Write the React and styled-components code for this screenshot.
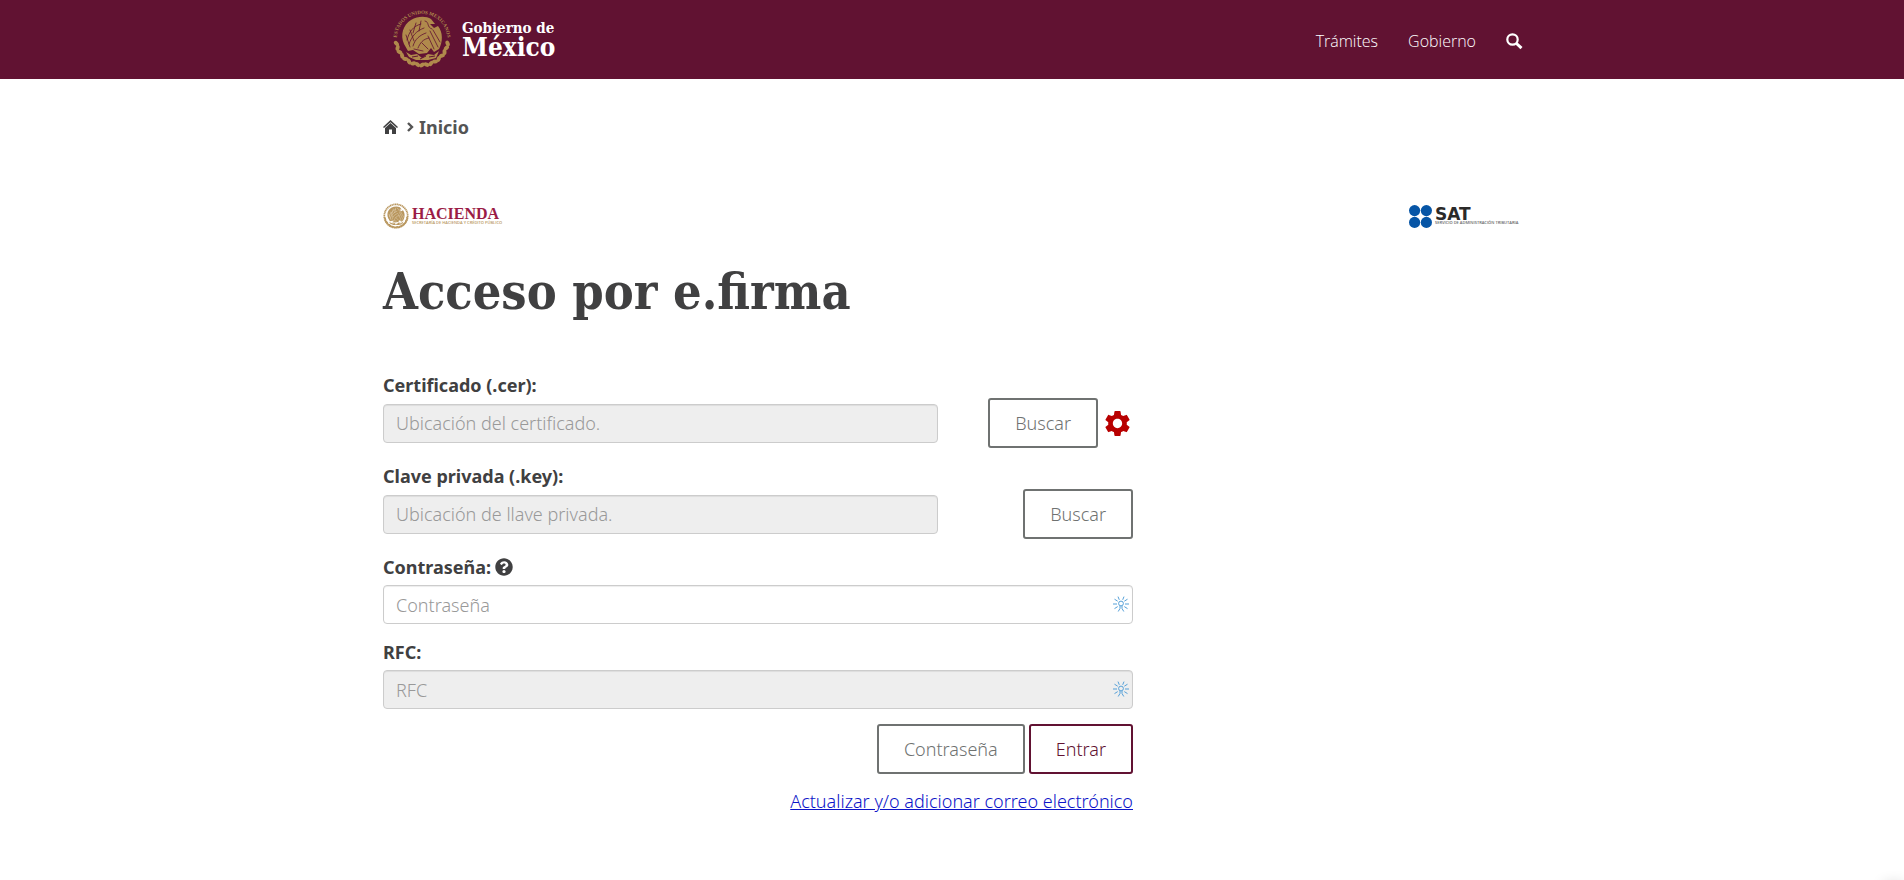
import React from "react";
import styled, { createGlobalStyle } from "styled-components";
import { FaQuestionCircle } from "react-icons/fa";
import { MdSettings } from "react-icons/md";

const GlobalStyle = createGlobalStyle`
  * {
    box-sizing: border-box;
  }
  body {
    margin: 0;
    background: #fff;
    color: #404041;
    font-family: "Noto Sans", "Open Sans", sans-serif;
    font-size: 18px;
    font-weight: 300;
    line-height: 26px;
  }
  strong {
    font-weight: 700;
  }
`;

const serif = `"DejaVu Serif Condensed", "Liberation Serif", serif`;

const arms = [...Array(17)].map((_, i) => 12 + i * 10);

const Emblem = ({ size, color, back, lettering }) => (
  <svg width={size} height={size} viewBox="0 0 60 60" aria-hidden="true">
    <defs>
      <path id="emblem-arc" d="M5.3 35 A25.2 25.2 0 1 1 54.7 35" />
    </defs>
    {lettering ? (
      <text fill={color} fontSize="5" fontWeight="700" fontFamily="Liberation Serif, serif">
        <textPath href="#emblem-arc" startOffset="50%" textAnchor="middle">
          ESTADOS UNIDOS MEXICANOS
        </textPath>
      </text>
    ) : (
      <circle cx="30" cy="30" r="27" fill="none" stroke={color} strokeWidth="4" strokeDasharray="3 1" />
    )}
    {/* laurel and oak wreath */}
    <g fill={color}>
      {arms.map((a, i) => (
        <ellipse
          key={a}
          cx="30"
          cy="4"
          rx="3"
          ry="2"
          transform={`rotate(${a + 88} 30 30) rotate(${i % 2 ? 32 : -32} 30 4)`}
        />
      ))}
    </g>
    {/* eagle */}
    <path
      d="M12 35 C8 26 11 16 19 11 C26 7 34 7 39 10 L43 15 L38 15 L42 19 L46 17 C51 23 51 33 47 40 L42 43 L39 39 L35 44 L27 45 L21 41 L16 42 Z"
      fill={color}
    />
    <g fill="none" stroke={back} strokeWidth="0.8" strokeLinecap="round">
      <path d="M15 31 C17 23 21 17 29 15" />
      <path d="M17 35 C20 27 24 22 32 19" />
      <path d="M21 37 C23 30 28 26 34 24" />
      <path d="M26 39 C28 34 31 30 37 29" />
      <path d="M38 22 L46 38 M41 21 L48 33 M36 27 L42 40" />
      <path d="M24 14 L21 24 M29 12 L27 22 M18 21 L22 32 M14 26 L18 38" />
      <path d="M33 12 C38 13 34 18 40 20 M30 34 L36 40 M22 40 L31 42" />
    </g>
    <path
      d="M14 43 L19 46 L25 45 L30 49 L36 45 L42 46 L47 42 L44 49 L36 51 L24 51 L17 48 Z"
      fill={color}
    />
    <path d="M20 48 L26 47 M28 50 L34 47 M37 48 L43 47" stroke={back} strokeWidth="1" />
  </svg>
);

const HomeIcon = () => (
  <svg width="15" height="14" viewBox="0 0 15 14" aria-hidden="true">
    <path d="M7.5 0 L15 7 L14 8 L7.5 2.2 L1 8 L0 7 Z" fill="#404041" />
    <path d="M7.5 3 L13 8 V14 H9 V9.5 H6 V14 H2 V8 Z" fill="#404041" />
  </svg>
);

const ChevronIcon = () => (
  <svg width="7" height="10" viewBox="0 0 7 10" fill="none" stroke="#545454" aria-hidden="true">
    <path d="M1 1 L5 5 L1 9" strokeWidth="2.4" />
  </svg>
);

const SearchIcon = () => (
  <svg width="17" height="17" viewBox="0 0 17 17" fill="none" stroke="#fff" aria-hidden="true">
    <circle cx="6.5" cy="6.5" r="5.2" strokeWidth="2.2" />
    <path d="M10.5 10.5 L15.5 15.2" strokeWidth="3" />
  </svg>
);

const SparkIcon = () => (
  <svg width="16" height="16" viewBox="0 0 16 16" fill="none" stroke="#55a0d8" aria-hidden="true">
    <circle cx="8" cy="7.5" r="2.4" />
    <path d="M0 8 H4 M12 8 H16 M1.5 3.2 L4.7 5.2 M14.5 3.2 L11.3 5.2 M5 0.6 L6.3 3.8 M11 0.6 L9.7 3.8 M1.5 12.6 L4.7 10.6 M14.5 12.6 L11.3 10.6 M7 10 V12.5 L5.2 15.5 M9 10 V12.5 L10.8 15.5" />
  </svg>
);

const SatMark = () => (
  <svg width="23" height="23" viewBox="0 0 23 23" fill="#0655a6" aria-hidden="true">
    <circle cx="5.6" cy="5.6" r="5.6" />
    <circle cx="17.4" cy="5.6" r="5.6" />
    <circle cx="5.6" cy="17.4" r="5.6" />
    <circle cx="17.4" cy="17.4" r="5.6" />
  </svg>
);

const App = () => {
  return (
    <>
      <GlobalStyle />
      <Header>
        <HeaderInner>
          <Brand href="#">
            <Emblem size={60} color="#b08a4c" back="#611232" lettering />
            <BrandText>
              <small>Gobierno de</small>
              <strong>México</strong>
            </BrandText>
          </Brand>
          <Nav>
            <a href="#">Trámites</a>
            <a href="#">Gobierno</a>
            <a href="#" aria-label="Buscar">
              <SearchIcon />
            </a>
          </Nav>
        </HeaderInner>
      </Header>
      <Container>
        <Breadcrumb>
          <a href="#" aria-label="Portada">
            <HomeIcon />
          </a>
          <ChevronIcon />
          <span>Inicio</span>
        </Breadcrumb>
        <Logos>
          <Logo>
            <Emblem size={26} color="#b9975f" back="#f3ead9" />
            <Hacienda>
              <strong>HACIENDA</strong>
              <small>SECRETARÍA DE HACIENDA Y CRÉDITO PÚBLICO</small>
            </Hacienda>
          </Logo>
          <Logo>
            <SatMark />
            <Sat>
              <strong>SAT</strong>
              <small>SERVICIO DE ADMINISTRACIÓN TRIBUTARIA</small>
            </Sat>
          </Logo>
        </Logos>
        <Title>Acceso por e.firma</Title>
        <Form onSubmit={(e) => e.preventDefault()}>
          <Field>
            <Label htmlFor="cer">Certificado (.cer):</Label>
            <FileRow>
              <Input id="cer" placeholder="Ubicación del certificado." disabled />
              <Actions>
                <Button type="button">Buscar</Button>
                <GearButton type="button" aria-label="Configuración">
                  <MdSettings size={31} />
                </GearButton>
              </Actions>
            </FileRow>
          </Field>
          <Field>
            <Label htmlFor="key">Clave privada (.key):</Label>
            <FileRow>
              <Input id="key" placeholder="Ubicación de llave privada." disabled />
              <Actions>
                <Button type="button">Buscar</Button>
              </Actions>
            </FileRow>
          </Field>
          <Field>
            <Label htmlFor="password">
              Contraseña: <FaQuestionCircle size={18} />
            </Label>
            <InputBox>
              <Input id="password" type="password" placeholder="Contraseña" />
              <SparkIcon />
            </InputBox>
          </Field>
          <Field>
            <Label htmlFor="rfc">RFC:</Label>
            <InputBox>
              <Input id="rfc" placeholder="RFC" disabled />
              <SparkIcon />
            </InputBox>
          </Field>
          <Submit>
            <Button type="button">Contraseña</Button>
            <Button type="submit" $primary>
              Entrar
            </Button>
          </Submit>
          <MailLink href="#">Actualizar y/o adicionar correo electrónico</MailLink>
        </Form>
      </Container>
      <CornerGlow />
    </>
  );
};

const Container = styled.main`
  max-width: 1168px;
  margin: 0 auto;
  padding: 0 15px;
`;

const Header = styled.header`
  background: #611232;
`;

const HeaderInner = styled(Container).attrs({ as: "div" })`
  display: flex;
  justify-content: space-between;
  align-items: center;
  height: 79px;
  padding: 0 13px 2px 24px;
`;

const Brand = styled.a`
  display: flex;
  align-items: center;
  gap: 10px;
  color: #fff;
  text-decoration: none;
`;

const BrandText = styled.span`
  display: flex;
  flex-direction: column;
  font-family: ${serif};
  font-weight: 700;

  small {
    font-size: 15px;
    line-height: 16px;
  }

  strong {
    font-size: 26px;
    line-height: 22px;
  }
`;

const Nav = styled.nav`
  display: flex;
  align-items: center;
  gap: 30px;
  font-family: "Open Sans", sans-serif;
  font-size: 16px;
  padding-top: 5px;

  a {
    display: flex;
    color: #fff;
    text-decoration: none;
  }
`;

const Breadcrumb = styled.nav`
  display: flex;
  align-items: center;
  padding-top: 35px;
  font-weight: 700;
  color: #545454;

  a {
    display: flex;
    margin-right: 9px;
  }

  span {
    margin-left: 5px;
  }
`;

const Logos = styled.div`
  display: flex;
  justify-content: space-between;
  margin-top: 62px;
  padding-right: 3px;
`;

const Logo = styled.div`
  display: flex;
  gap: 3px;
  height: 28px;
  align-items: center;
`;

const LogoText = styled.span`
  display: flex;
  flex-direction: column;

  small {
    font-family: "Open Sans", sans-serif;
    font-size: 4px;
    font-weight: 600;
    line-height: 4px;
    white-space: nowrap;
  }
`;

const Hacienda = styled(LogoText)`
  strong {
    color: #9b1c46;
    font-family: "Liberation Serif", serif;
    font-size: 16px;
    line-height: 14px;
  }

  small {
    color: #b9975f;
  }
`;

const Sat = styled(LogoText)`
  width: 83px;

  strong {
    color: #2b2a29;
    font-family: "DejaVu Sans", sans-serif;
    font-size: 17px;
    line-height: 14px;
  }

  small {
    color: #666;
  }
`;

const Title = styled.h1`
  margin: 31px 0 49px;
  font-family: ${serif};
  font-size: 50px;
  font-weight: 700;
  line-height: 62px;
`;

const Form = styled.form`
  display: flex;
  flex-direction: column;
  max-width: 750px;
`;

const Field = styled.div`
  margin-bottom: 15px;
`;

const Label = styled.label`
  display: flex;
  align-items: center;
  gap: 4px;
  font-weight: 700;
`;

const FileRow = styled.div`
  display: grid;
  grid-template-columns: 555px 1fr;
  align-items: center;
`;

const Input = styled.input`
  width: 100%;
  height: 39px;
  padding: 6px 12px;
  border: 1px solid #ccc;
  border-radius: 4px;
  background: #fff;
  box-shadow: inset 0 1px 1px rgba(0, 0, 0, 0.075);
  color: #404041;
  font: inherit;

  &:disabled {
    background: #eee;
  }

  &::placeholder {
    color: #999;
    opacity: 1;
  }
`;

const InputBox = styled.div`
  position: relative;
  margin-top: 5px;
  display: flex;

  svg {
    position: absolute;
    right: 4px;
    top: 11px;
  }
`;

const Actions = styled.div`
  display: flex;
  justify-content: flex-end;
  align-items: center;
  gap: 4px;
`;

const Button = styled.button`
  height: 50px;
  padding: 0 25px;
  border: 2px solid ${(props) => (props.$primary ? "#611232" : "#6f7271")};
  border-radius: 3px;
  background: #fff;
  color: ${(props) => (props.$primary ? "#611232" : "#6f7271")};
  font: inherit;
  cursor: pointer;
`;

const GearButton = styled.button`
  display: flex;
  padding: 0;
  border: 0;
  background: none;
  color: #b80000;
  cursor: pointer;
`;

const Submit = styled(Actions)`
  margin-bottom: 14px;
`;

const MailLink = styled.a`
  align-self: flex-end;
  color: #0c14c8;
  text-decoration: underline;
`;

const CornerGlow = styled.div`
  position: fixed;
  right: 0;
  bottom: -10px;
  width: 20px;
  height: 5px;
  box-shadow: 0 0 14px rgba(0, 0, 0, 0.3);
`;

export default App;
